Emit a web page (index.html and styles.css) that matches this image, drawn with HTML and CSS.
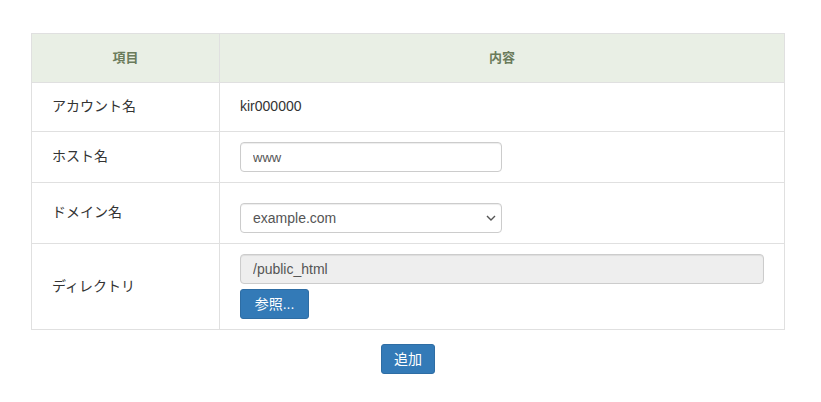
FILE: index.html
```html
<!DOCTYPE html>
<html lang="ja">
<head>
<meta charset="utf-8">
<link rel="stylesheet" href="styles.css">
</head>
<body>
<div class="page">
  <table class="form-table">
    <thead>
      <tr class="row-head">
        <th class="col-item">項目</th>
        <th class="col-content">内容</th>
      </tr>
    </thead>
    <tbody>
      <tr class="row-account">
        <td class="label">アカウント名</td>
        <td class="value">kir000000</td>
      </tr>
      <tr class="row-host">
        <td class="label">ホスト名</td>
        <td class="value"><input class="field field-short" type="text" value="www"></td>
      </tr>
      <tr class="row-domain">
        <td class="label">ドメイン名</td>
        <td class="value value-domain">
          <div class="select-wrap">
            <select class="field field-short select">
              <option>example.com</option>
            </select>
            <svg class="chevron" width="10" height="6" viewBox="0 0 10 6" aria-hidden="true">
              <path d="M1 1 L5 5 L9 1" fill="none" stroke="#555" stroke-width="1.4"/>
            </svg>
          </div>
        </td>
      </tr>
      <tr class="row-dir">
        <td class="label">ディレクトリ</td>
        <td class="value value-dir">
          <input class="field field-wide" type="text" value="/public_html" disabled>
          <button class="btn btn-browse" type="button">参照...</button>
        </td>
      </tr>
    </tbody>
  </table>
  <div class="actions">
    <button class="btn btn-add" type="button">追加</button>
  </div>
</div>
</body>
</html>
```

FILE: styles.css
```css
html, body {
  margin: 0;
  padding: 0;
  background: #fff;
}
body {
  font-family: "Liberation Sans", Arial, "Noto Sans CJK JP", sans-serif;
  font-size: 14px;
  line-height: 1.42857;
  color: #333;
}
.page {
  padding: 33px 37px 0 31px;
}
.form-table {
  width: 754px;
  border-collapse: collapse;
  border: 1px solid #e0e0e0;
}
.form-table th,
.form-table td {
  border: 1px solid #e0e0e0;
  padding: 0 20px;
  vertical-align: middle;
}
.form-table th {
  background: #e9efe5;
  color: #6a7b5b;
  font-weight: bold;
  text-align: center;
  font-size: 13px;
}
.col-item {
  width: 147px;
}
.row-head { height: 49px; }
.row-account { height: 49px; }
.row-host { height: 51px; }
.row-domain { height: 61px; }
.row-dir { height: 86px; }
.label {
  text-align: left;
}
.form-table .value-domain {
  padding-top: 20px;
  padding-bottom: 10px;
}
.form-table .value-dir {
  padding-top: 10px;
  padding-bottom: 10px;
}
.field {
  display: block;
  box-sizing: border-box;
  height: 30px;
  border: 1px solid #ccc;
  border-radius: 4px;
  font-family: "Liberation Sans", Arial, sans-serif;
  font-size: 14px;
  color: #555;
  padding: 0 12px;
  background: #fff;
  box-shadow: inset 0 1px 1px rgba(0,0,0,.075);
  margin: 0;
}
.field-short {
  width: 262px;
}
.field-wide {
  width: 524px;
}
.field[disabled] {
  background: #eee;
  color: #555;
}
input.field-short {
  font-size: 13px;
}
.select-wrap {
  position: relative;
  width: 262px;
}
.select {
  -webkit-appearance: none;
  appearance: none;
  padding: 0 12px;
}
.chevron {
  position: absolute;
  right: 6px;
  top: 12px;
  pointer-events: none;
}
.btn {
  display: inline-block;
  box-sizing: border-box;
  height: 30px;
  padding: 0 12px;
  background: #337ab7;
  border: 1px solid #2e6da4;
  border-radius: 3px;
  color: #fff;
  font-family: "Liberation Sans", Arial, "Noto Sans CJK JP", sans-serif;
  font-size: 14px;
  line-height: 28px;
}
.btn-browse {
  margin-top: 5px;
  width: 69px;
}
.actions {
  width: 754px;
  display: flex;
  justify-content: center;
  padding-top: 14px;
}
.btn-add {
  width: 54px;
}
```
